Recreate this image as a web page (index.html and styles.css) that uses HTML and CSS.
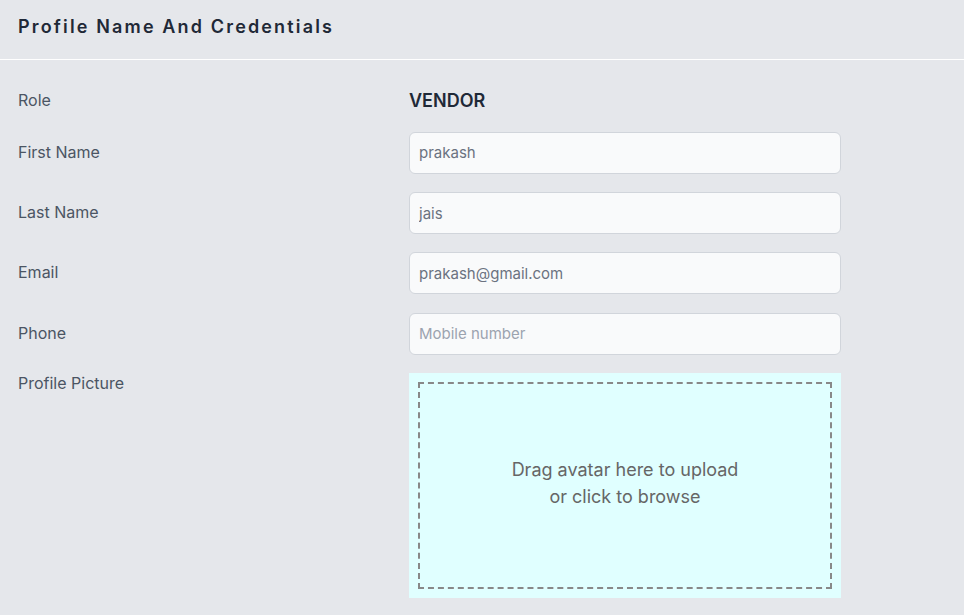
FILE: index.html
```html
<!DOCTYPE html>
<html>
<head>
<meta charset="utf-8">
<link rel="stylesheet" href="styles.css">
</head>
<body>
<div class="card">
  <div class="card-header">
    <h2 class="title">Profile Name And Credentials</h2>
  </div>
  <div class="form">
    <div class="row role-row">
      <div class="label">Role</div>
      <div class="value">VENDOR</div>
    </div>
    <div class="row">
      <div class="label">First Name</div>
      <div class="field"><input class="input" type="text" value="prakash"></div>
    </div>
    <div class="row">
      <div class="label">Last Name</div>
      <div class="field"><input class="input" type="text" value="jais"></div>
    </div>
    <div class="row">
      <div class="label">Email</div>
      <div class="field"><input class="input" type="text" value="prakash@gmail.com"></div>
    </div>
    <div class="row">
      <div class="label">Phone</div>
      <div class="field"><input class="input" type="text" placeholder="Mobile number"></div>
    </div>
    <div class="row picture-row">
      <div class="label">Profile Picture</div>
      <div class="field">
        <div class="upload">
          <div class="dropzone">
            <span>Drag avatar here to upload</span>
            <span>or click to browse</span>
          </div>
        </div>
      </div>
    </div>
  </div>
</div>
</body>
</html>
```

FILE: styles.css
```css
* { box-sizing: border-box; }
html, body {
  margin: 0;
  padding: 0;
  background: #e5e7eb;
  font-family: Inter, "Noto Sans", sans-serif;
  color: #374151;
}
.card {
  width: 964px;
}
.card-header {
  height: 60px;
  border-bottom: 1px solid #ffffff;
  display: flex;
  align-items: center;
  padding: 0 18px 6px;
}
.title {
  margin: 0;
  font-size: 18px;
  font-weight: 600;
  letter-spacing: 2.15px;
  color: #1f2937;
}
.form {
  padding: 28px 18px 0;
  display: flex;
  flex-direction: column;
  gap: 18.25px;
}
.row {
  display: grid;
  grid-template-columns: 391px 432px;
  align-items: start;
}
.label {
  font-size: 16px;
  color: #4b5563;
  padding-top: 8px;
  line-height: 24px;
}
.role-row .label { padding-top: 0; }
.picture-row .label { padding-top: 0; line-height: 20px; }
.role-row {
  align-items: center;
  height: 24px;
  margin-bottom: 1.5px;
}
.value {
  font-size: 18px;
  font-weight: 600;
  color: #1f2937;
}
.input {
  display: block;
  width: 432px;
  height: 42px;
  padding: 0 9px;
  border: 1px solid #d1d5db;
  border-radius: 6px;
  background: #f9fafb;
  font-family: Inter, "Noto Sans", sans-serif;
  font-size: 15px;
  color: #6b7280;
  outline: none;
}
.input::placeholder { color: #9ca3af; }
.upload {
  width: 432px;
  height: 225px;
  background: #e0ffff;
  padding: 9px;
}
.dropzone {
  height: 100%;
  border: 2px dashed #888888;
  display: flex;
  flex-direction: column;
  align-items: center;
  justify-content: center;
  font-size: 18px;
  line-height: 27px;
  color: #666666;
  padding-bottom: 4px;
}
```
